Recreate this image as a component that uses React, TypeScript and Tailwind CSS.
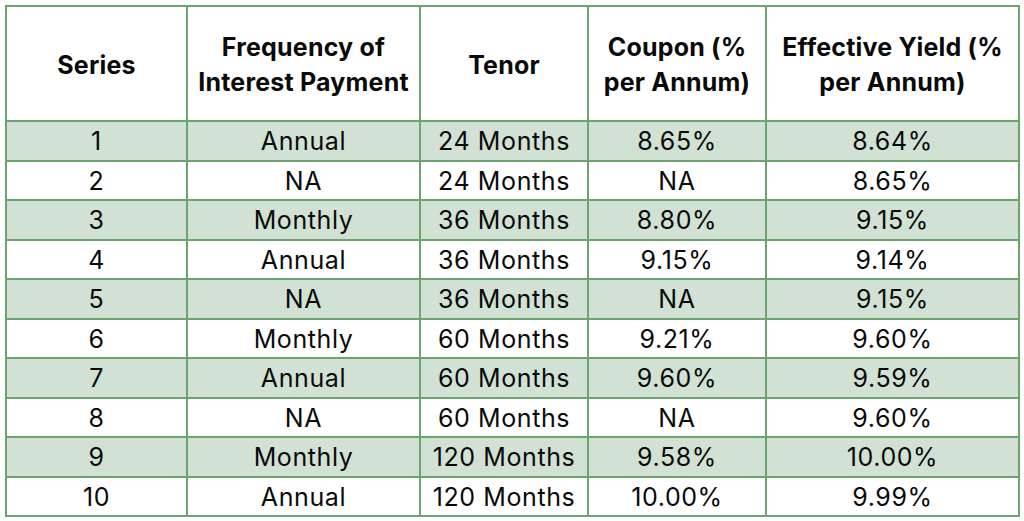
import React from "react";

const rows = [
  ["1", "Annual", "24 Months", "8.65%", "8.64%"],
  ["2", "NA", "24 Months", "NA", "8.65%"],
  ["3", "Monthly", "36 Months", "8.80%", "9.15%"],
  ["4", "Annual", "36 Months", "9.15%", "9.14%"],
  ["5", "NA", "36 Months", "NA", "9.15%"],
  ["6", "Monthly", "60 Months", "9.21%", "9.60%"],
  ["7", "Annual", "60 Months", "9.60%", "9.59%"],
  ["8", "NA", "60 Months", "NA", "9.60%"],
  ["9", "Monthly", "120 Months", "9.58%", "10.00%"],
  ["10", "Annual", "120 Months", "10.00%", "9.99%"],
];

export default function App() {
  return (
    <div
      className="w-[1024px] h-[521px] bg-white pt-[5px] pl-[5px]"
      style={{ fontFamily: "Inter, 'Noto Sans', sans-serif" }}
    >
      <table className="border-collapse table-fixed w-[1013px] text-[#0a0a0a] border-2 border-[#6aa56f]">
        <colgroup>
          <col className="w-[181px]" />
          <col className="w-[233px]" />
          <col className="w-[168px]" />
          <col className="w-[178px]" />
          <col className="w-[253px]" />
        </colgroup>
        <thead>
          <tr className="h-[115px]">
            {[
              ["Series"],
              ["Frequency of", "Interest Payment"],
              ["Tenor"],
              ["Coupon (%", "per Annum)"],
              ["Effective Yield (%", "per Annum)"],
            ].map((lines, i) => (
              <th
                key={i}
                className="border-2 border-[#6aa56f] text-center align-middle font-bold text-[25px] tracking-[0.2px] leading-[35px] p-0 pt-[3px] whitespace-nowrap"
              >
                {lines.map((l, j) => (
                  <div key={j}>{l}</div>
                ))}
              </th>
            ))}
          </tr>
        </thead>
        <tbody>
          {rows.map((r, i) => (
            <tr key={i} className={`h-[39.5px] ${i % 2 === 0 ? "bg-[#d1e2d4]" : "bg-white"}`}>
              {r.map((c, j) => (
                <td
                  key={j}
                  className="border-2 border-[#6aa56f] text-center align-middle text-[25px] tracking-[0.6px] leading-none p-0 pt-[2px] whitespace-nowrap"
                >
                  {c}
                </td>
              ))}
            </tr>
          ))}
        </tbody>
      </table>
    </div>
  );
}
